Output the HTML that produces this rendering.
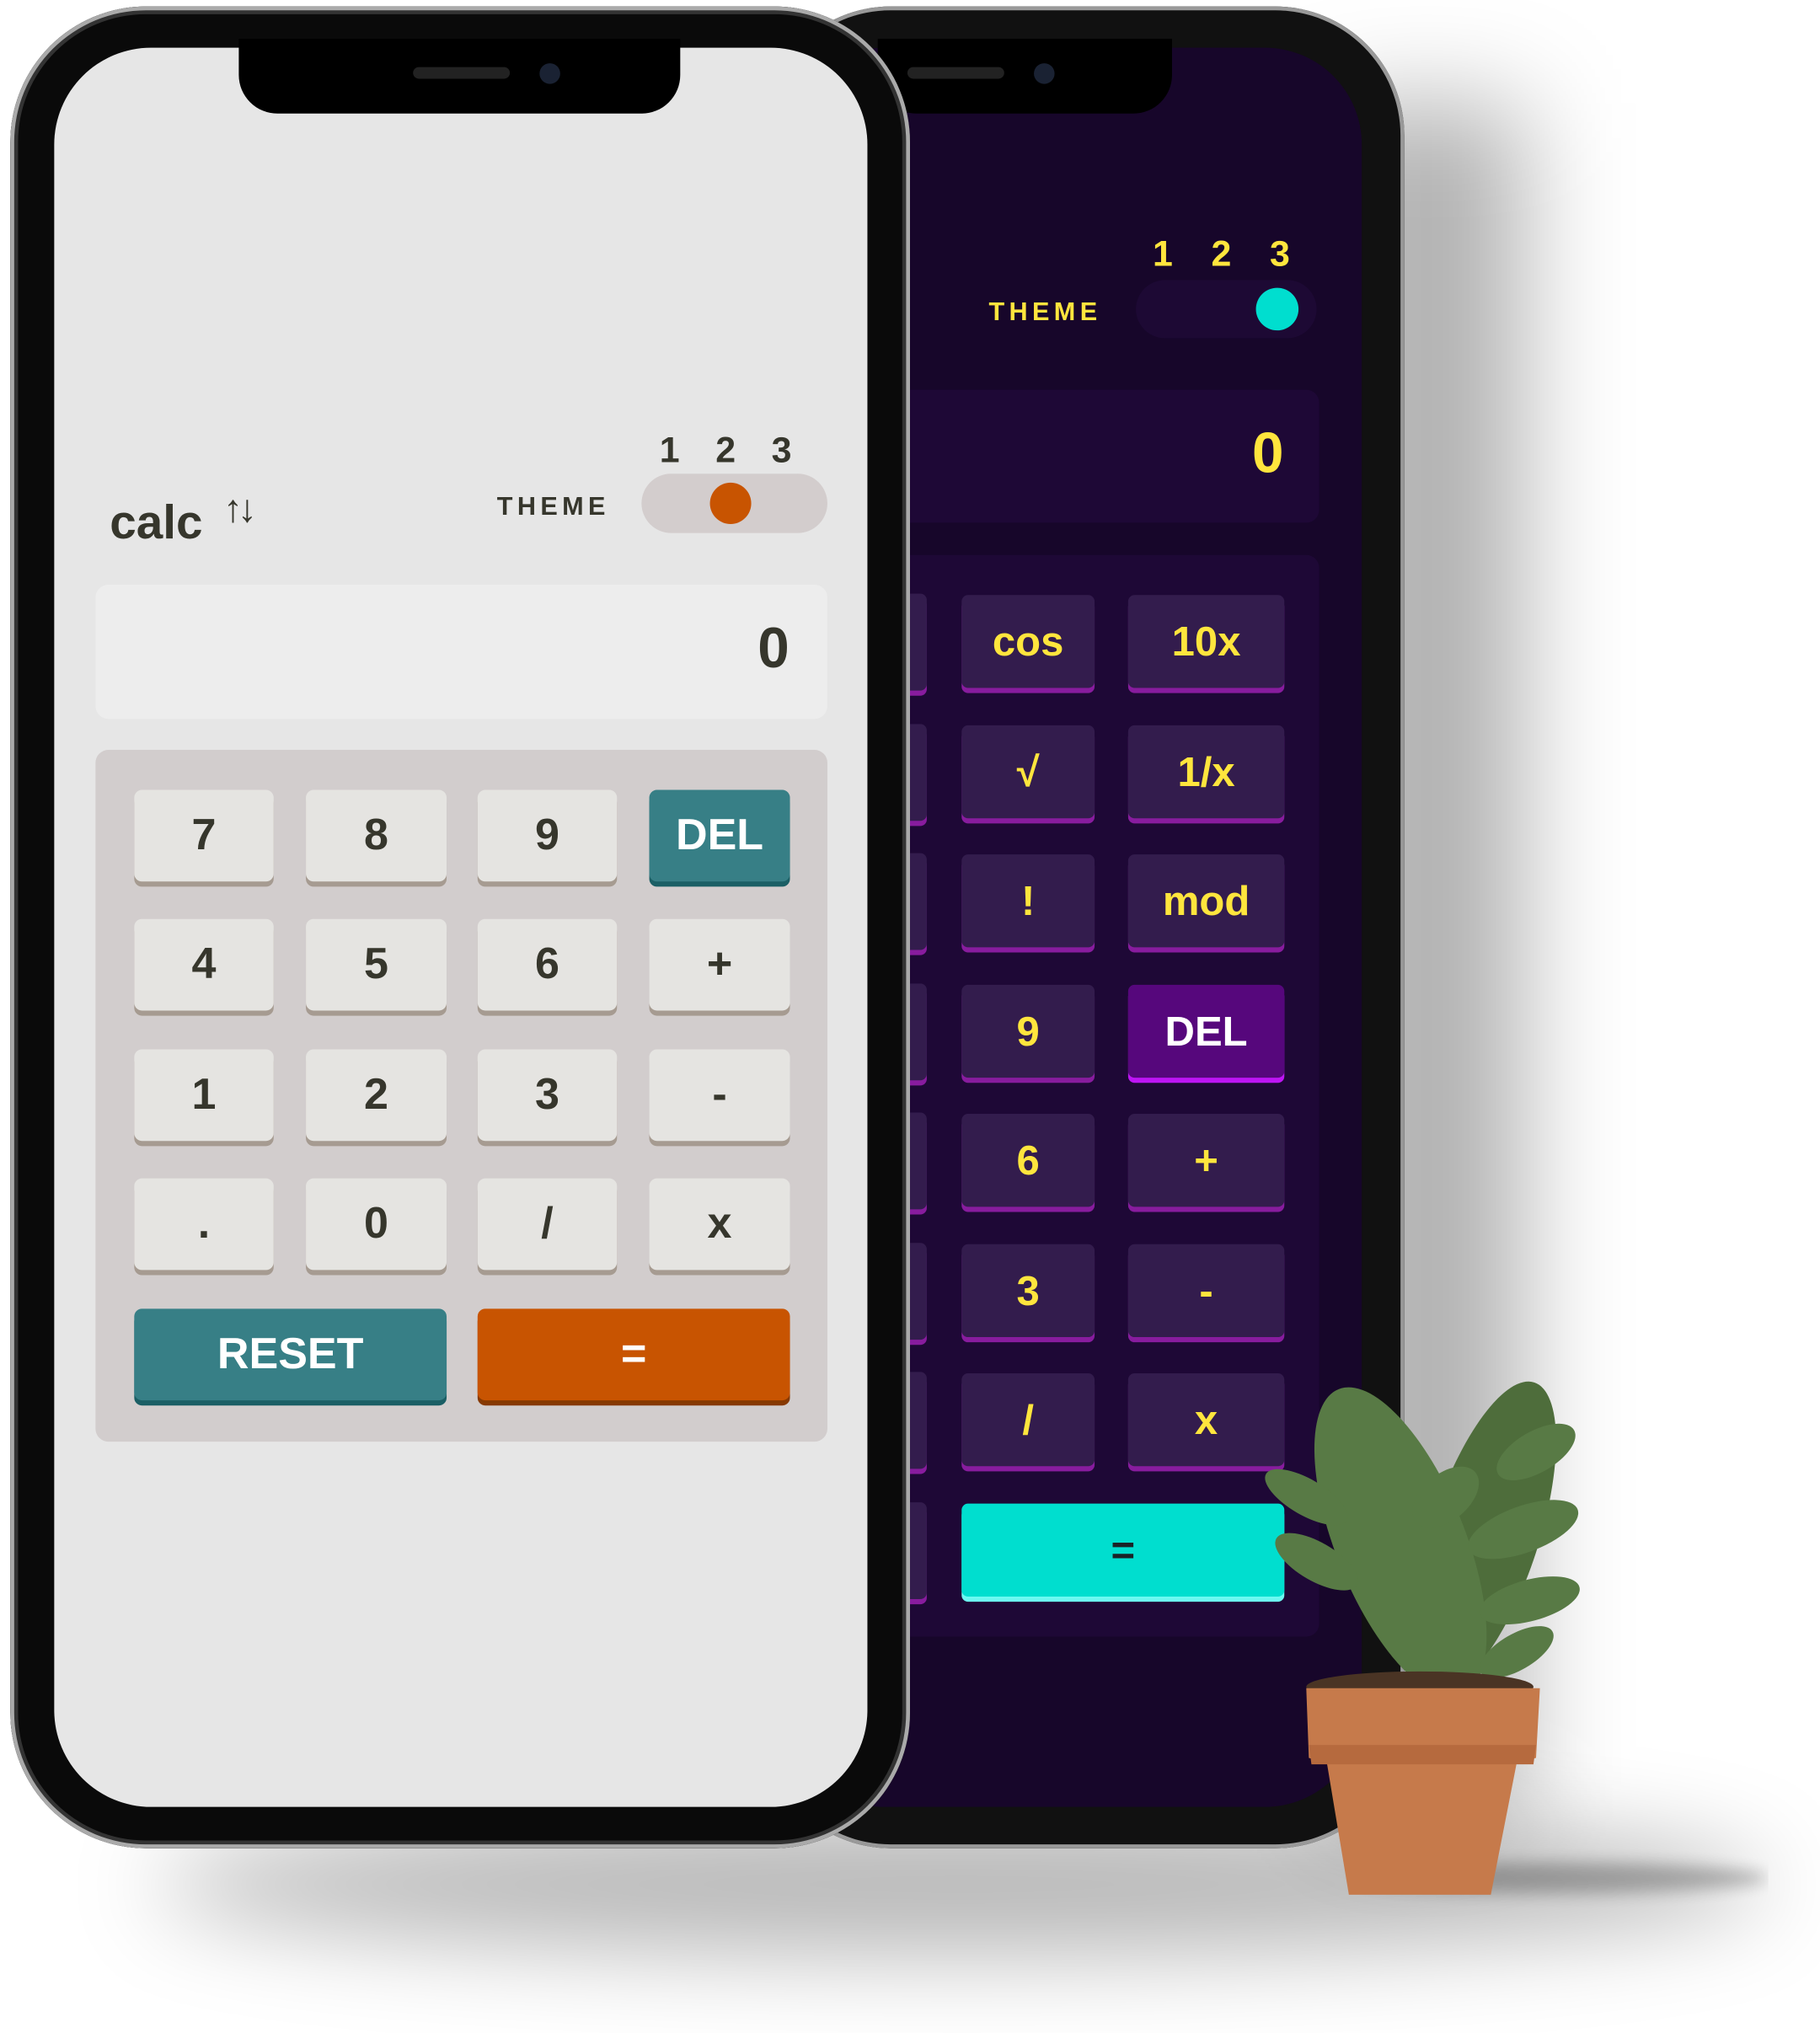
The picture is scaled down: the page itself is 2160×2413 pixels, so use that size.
<!DOCTYPE html>
<html><head><meta charset="utf-8"><style>
html,body{margin:0;padding:0;background:#fff;width:2160px;height:2412px;overflow:hidden}
#w{position:absolute;left:0;top:0;width:1410px;height:1575px;transform:scale(1.53191);transform-origin:0 0;font-family:"Liberation Sans",sans-serif;font-weight:bold}
.a{position:absolute}
.k{position:absolute;border-radius:6px;background:#e5e4e1;box-shadow:0 4px 0 #a69b91;color:#36362c;font-size:34px;display:flex;align-items:center;justify-content:center}
.d{position:absolute;border-radius:5px;background:#331c4d;box-shadow:0 4px 0 #881c9e;color:#ffe53d;font-size:32px;display:flex;align-items:center;justify-content:center}
</style></head><body><div id="w">
<!-- shadows -->
<div class="a" style="left:120px;top:1405px;width:1250px;height:110px;border-radius:50%;background:rgba(0,0,0,.28);filter:blur(35px)"></div>
<div class="a" style="left:1030px;top:80px;width:150px;height:1330px;background:rgba(0,0,0,.3);filter:blur(40px)"></div>
<!-- back phone -->
<div class="a" style="left:590px;top:5px;width:498px;height:1427px;border-radius:100px;background:#111;box-shadow:inset 0 0 0 3px #999"></div>
<div class="a" style="left:610px;top:37px;width:445px;height:1363px;border-radius:75px;background:#17062a"></div>
<div class="a" style="left:680px;top:30px;width:228px;height:58px;border-radius:0 0 30px 30px;background:#000"></div>
<div class="a" style="left:703px;top:52px;width:75px;height:9px;border-radius:5px;background:#222"></div>
<div class="a" style="left:801px;top:49px;width:16px;height:16px;border-radius:50%;background:#1a2233"></div>
<div class="a" style="left:766px;top:231px;color:#ffe53d;font-size:20px;letter-spacing:3.5px">THEME</div>
<div class="a" style="left:893px;top:181px;color:#ffe53d;font-size:28px;word-spacing:22px">1 2 3</div>
<div class="a" style="left:880px;top:217px;width:140px;height:45px;border-radius:23px;background:#1d0934"></div>
<div class="a" style="left:973px;top:223px;width:33px;height:33px;border-radius:50%;background:#00decf"></div>
<div class="a" style="left:690px;top:302px;width:332px;height:103px;border-radius:10px;background:#1e0836"></div>
<div class="a" style="left:970px;top:327px;color:#ffe53d;font-size:44px">0</div>
<div class="a" style="left:690px;top:430px;width:332px;height:838px;border-radius:10px;background:#1e0836"></div>
<div class="d" style="left:690px;top:460px;width:28px;height:75px"></div>
<div class="d" style="left:690px;top:561px;width:28px;height:75px"></div>
<div class="d" style="left:690px;top:661px;width:28px;height:75px"></div>
<div class="d" style="left:690px;top:762px;width:28px;height:75px"></div>
<div class="d" style="left:690px;top:862px;width:28px;height:75px"></div>
<div class="d" style="left:690px;top:963px;width:28px;height:75px"></div>
<div class="d" style="left:690px;top:1063px;width:28px;height:75px"></div>
<div class="d" style="left:690px;top:1164px;width:28px;height:75px"></div>
<div class="d" style="left:745px;top:461px;width:103px;height:72px">cos</div>
<div class="d" style="left:874px;top:461px;width:121px;height:72px">10x</div>
<div class="d" style="left:745px;top:562px;width:103px;height:72px">√</div>
<div class="d" style="left:874px;top:562px;width:121px;height:72px">1/x</div>
<div class="d" style="left:745px;top:662px;width:103px;height:72px">!</div>
<div class="d" style="left:874px;top:662px;width:121px;height:72px">mod</div>
<div class="d" style="left:745px;top:763px;width:103px;height:72px">9</div>
<div class="d" style="left:874px;top:763px;width:121px;height:72px;background:#56077c;box-shadow:0 4px 0 #be15f4;color:#fff">DEL</div>
<div class="d" style="left:745px;top:863px;width:103px;height:72px">6</div>
<div class="d" style="left:874px;top:863px;width:121px;height:72px">+</div>
<div class="d" style="left:745px;top:964px;width:103px;height:72px">3</div>
<div class="d" style="left:874px;top:964px;width:121px;height:72px">-</div>
<div class="d" style="left:745px;top:1064px;width:103px;height:72px">/</div>
<div class="d" style="left:874px;top:1064px;width:121px;height:72px">x</div>
<div class="d" style="left:745px;top:1165px;width:250px;height:72px;background:#00decf;box-shadow:0 4px 0 #6cf9f1;color:#1a2327">=</div>
<!-- front phone -->
<div class="a" style="left:8px;top:5px;width:697px;height:1427px;border-radius:105px;background:#0a0a0a;box-shadow:inset 0 0 0 3px #aaa,inset 0 0 0 6px #333"></div>
<div class="a" style="left:42px;top:37px;width:630px;height:1363px;border-radius:75px;background:#e6e6e6"></div>
<div class="a" style="left:185px;top:30px;width:342px;height:58px;border-radius:0 0 30px 30px;background:#000"></div>
<div class="a" style="left:320px;top:52px;width:75px;height:9px;border-radius:5px;background:#222"></div>
<div class="a" style="left:418px;top:49px;width:16px;height:16px;border-radius:50%;background:#1a2233"></div>
<div class="a" style="left:85px;top:384px;color:#36362c;font-size:37px">calc</div>
<div class="a" style="left:173px;top:378px;color:#36362c;font-size:30px;letter-spacing:-4px">↑↓</div>
<div class="a" style="left:385px;top:382px;color:#36362c;font-size:20px;letter-spacing:3.5px">THEME</div>
<div class="a" style="left:511px;top:333px;color:#36362c;font-size:28px;word-spacing:20px">1 2 3</div>
<div class="a" style="left:497px;top:367px;width:144px;height:46px;border-radius:23px;background:#d3cdcd"></div>
<div class="a" style="left:550px;top:374px;width:32px;height:32px;border-radius:50%;background:#c85401"></div>
<div class="a" style="left:74px;top:453px;width:567px;height:104px;border-radius:10px;background:#ededed"></div>
<div class="a" style="left:587px;top:478px;color:#36362c;font-size:44px">0</div>
<div class="a" style="left:74px;top:581px;width:567px;height:536px;border-radius:10px;background:#d2cdcd"></div>
<div class="k" style="left:104px;top:612px;width:108px;height:71px">7</div>
<div class="k" style="left:237px;top:612px;width:109px;height:71px">8</div>
<div class="k" style="left:370px;top:612px;width:108px;height:71px">9</div>
<div class="k" style="left:503px;top:612px;width:109px;height:71px;background:#377f86;box-shadow:0 4px 0 #1b5f65;color:#fff">DEL</div>
<div class="k" style="left:104px;top:712px;width:108px;height:71px">4</div>
<div class="k" style="left:237px;top:712px;width:109px;height:71px">5</div>
<div class="k" style="left:370px;top:712px;width:108px;height:71px">6</div>
<div class="k" style="left:503px;top:712px;width:109px;height:71px">+</div>
<div class="k" style="left:104px;top:813px;width:108px;height:71px">1</div>
<div class="k" style="left:237px;top:813px;width:109px;height:71px">2</div>
<div class="k" style="left:370px;top:813px;width:108px;height:71px">3</div>
<div class="k" style="left:503px;top:813px;width:109px;height:71px">-</div>
<div class="k" style="left:104px;top:913px;width:108px;height:71px">.</div>
<div class="k" style="left:237px;top:913px;width:109px;height:71px">0</div>
<div class="k" style="left:370px;top:913px;width:108px;height:71px">/</div>
<div class="k" style="left:503px;top:913px;width:109px;height:71px">x</div>
<div class="k" style="left:104px;top:1014px;width:242px;height:71px;background:#377f86;box-shadow:0 4px 0 #1b5f65;color:#fff">RESET</div>
<div class="k" style="left:370px;top:1014px;width:242px;height:71px;background:#c85401;box-shadow:0 4px 0 #873901;color:#fff">=</div>
<!-- cactus -->
<svg class="a" style="left:970px;top:1050px" width="400" height="440" viewBox="970 1050 400 440">
<ellipse cx="1210" cy="1455" rx="160" ry="12" fill="rgba(0,0,0,.25)" filter="blur(6px)"/>
<g fill="#587a45">
<ellipse cx="1150" cy="1190" rx="42" ry="125" transform="rotate(18 1150 1190)" fill="#4e6d3b"/>
<ellipse cx="1085" cy="1195" rx="50" ry="128" transform="rotate(-22 1085 1195)"/>
<ellipse cx="1012" cy="1160" rx="14" ry="36" transform="rotate(-60 1012 1160)"/>
<ellipse cx="1020" cy="1210" rx="15" ry="36" transform="rotate(-60 1020 1210)"/>
<ellipse cx="1190" cy="1125" rx="16" ry="34" transform="rotate(60 1190 1125)"/>
<ellipse cx="1180" cy="1185" rx="18" ry="45" transform="rotate(70 1180 1185)"/>
<ellipse cx="1185" cy="1240" rx="16" ry="40" transform="rotate(75 1185 1240)"/>
<ellipse cx="1175" cy="1280" rx="14" ry="32" transform="rotate(60 1175 1280)"/>
<ellipse cx="1120" cy="1160" rx="18" ry="30" transform="rotate(50 1120 1160)"/>
</g>
<ellipse cx="1100" cy="1307" rx="88" ry="12" fill="#4a3424"/>
<path d="M1012 1308 L1193 1308 L1190 1362 L1175 1366 L1155 1468 L1045 1468 L1028 1366 L1014 1362Z" fill="#c67a4b"/>
<path d="M1014 1352 L1190 1352 L1188 1367 L1016 1367Z" fill="#b66a3e"/>
</svg>
</div></body></html>
